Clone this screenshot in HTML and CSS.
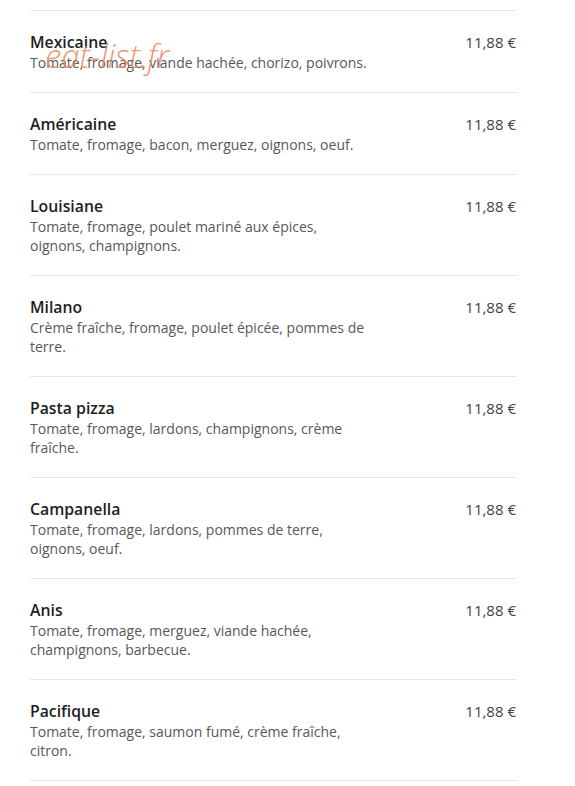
FILE: index.html
```html
<!DOCTYPE html>
<html lang="fr">
<head>
<meta charset="utf-8">
<link rel="stylesheet" href="styles.css">
</head>
<body>
<div class="menu">
  <div class="item">
    <div class="info">
      <div class="name">Mexicaine</div>
      <div class="desc">Tomate, fromage, viande hachée, chorizo, poivrons.</div>
    </div>
    <div class="price">11,88 €</div>
    <span class="watermark">eat-list.fr</span>
  </div>
  <div class="item">
    <div class="info">
      <div class="name">Américaine</div>
      <div class="desc">Tomate, fromage, bacon, merguez, oignons, oeuf.</div>
    </div>
    <div class="price">11,88 €</div>
  </div>
  <div class="item">
    <div class="info">
      <div class="name">Louisiane</div>
      <div class="desc">Tomate, fromage, poulet mariné aux épices, oignons, champignons.</div>
    </div>
    <div class="price">11,88 €</div>
  </div>
  <div class="item">
    <div class="info">
      <div class="name">Milano</div>
      <div class="desc">Crème fraîche, fromage, poulet épicée, pommes de terre.</div>
    </div>
    <div class="price">11,88 €</div>
  </div>
  <div class="item">
    <div class="info">
      <div class="name">Pasta pizza</div>
      <div class="desc">Tomate, fromage, lardons, champignons, crème fraîche.</div>
    </div>
    <div class="price">11,88 €</div>
  </div>
  <div class="item">
    <div class="info">
      <div class="name">Campanella</div>
      <div class="desc">Tomate, fromage, lardons, pommes de terre, oignons, oeuf.</div>
    </div>
    <div class="price">11,88 €</div>
  </div>
  <div class="item">
    <div class="info">
      <div class="name">Anis</div>
      <div class="desc">Tomate, fromage, merguez, viande hachée, champignons, barbecue.</div>
    </div>
    <div class="price">11,88 €</div>
  </div>
  <div class="item">
    <div class="info">
      <div class="name">Pacifique</div>
      <div class="desc">Tomate, fromage, saumon fumé, crème fraîche, citron.</div>
    </div>
    <div class="price">11,88 €</div>
  </div>
</div>
</body>
</html>
```
FILE: styles.css
```css
html, body {
  margin: 0;
  padding: 0;
  background: #ffffff;
}
body {
  font-family: "Open Sans", "Liberation Sans", sans-serif;
}
.menu {
  width: 486px;
  margin: 10px 0 0 30px;
  border-bottom: 1px solid #e6e6e6;
}
.item {
  position: relative;
  display: flex;
  justify-content: space-between;
  align-items: flex-start;
  border-top: 1px solid #e6e6e6;
  padding: 21px 0 20px 0;
}
.info {
  width: 340px;
}
.name {
  font-size: 15.8px;
  font-weight: 600;
  line-height: 21px;
  color: #1e1e1e;
}
.desc {
  font-size: 14px;
  line-height: 19px;
  color: #585858;
}
.price {
  font-size: 15px;
  line-height: 21px;
  color: #444444;
}
.watermark {
  position: absolute;
  left: 15px;
  top: 28px;
  font-family: "Open Sans", sans-serif;
  font-style: italic;
  font-weight: 300;
  font-size: 33px;
  line-height: 1;
  color: rgba(238, 132, 90, 0.85);
  pointer-events: none;
}
```
